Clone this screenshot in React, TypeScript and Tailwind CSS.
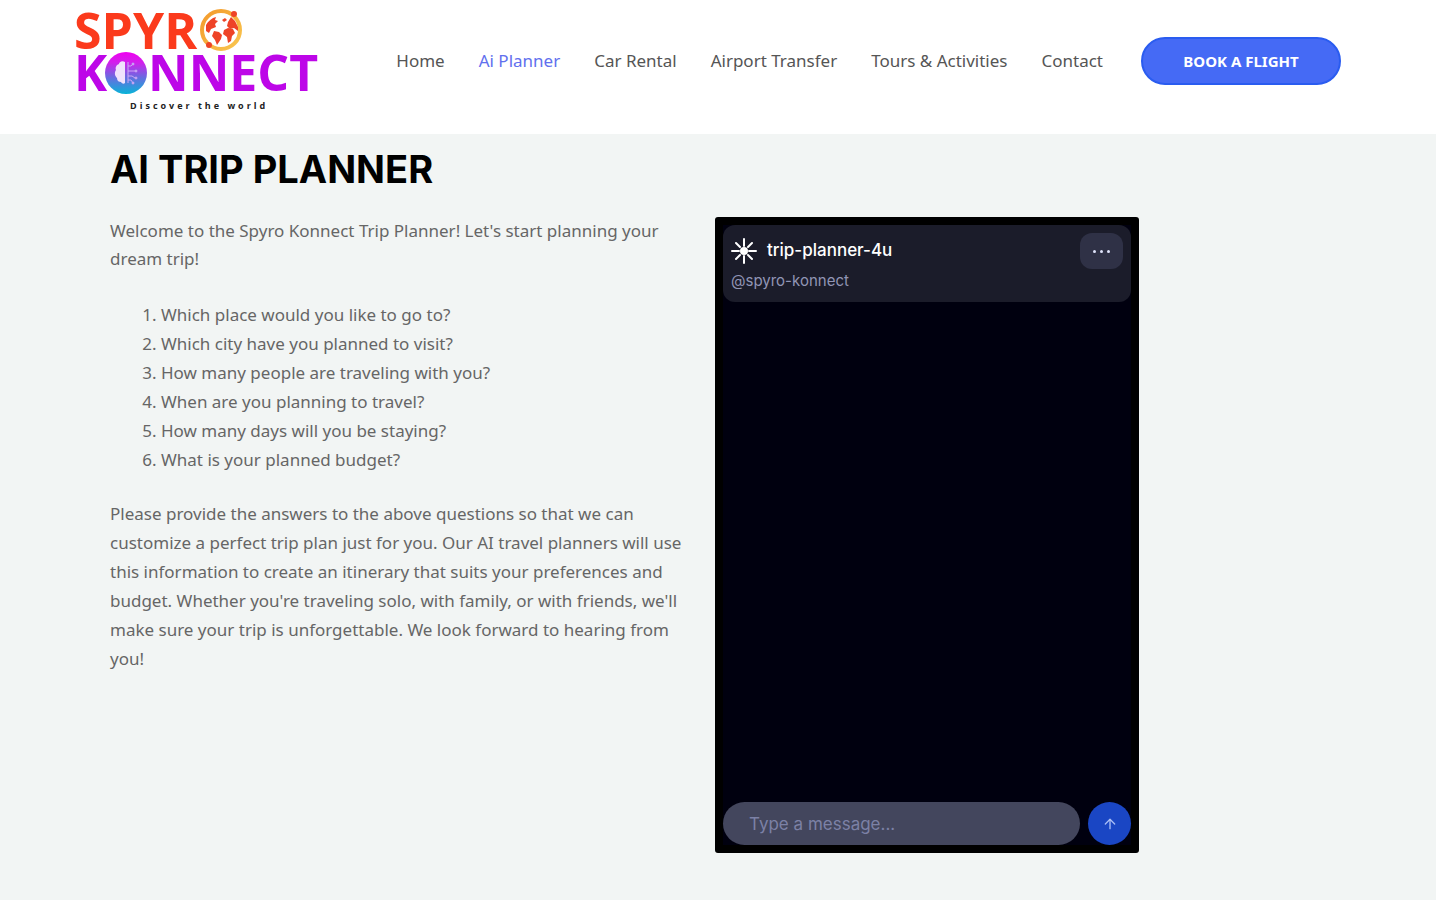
import { clsx } from "clsx"
import { ArrowUp } from "lucide-react"

const links = [
  "Home",
  "Ai Planner",
  "Car Rental",
  "Airport Transfer",
  "Tours & Activities",
  "Contact",
]

const questions = [
  "Which place would you like to go to?",
  "Which city have you planned to visit?",
  "How many people are traveling with you?",
  "When are you planning to travel?",
  "How many days will you be staying?",
  "What is your planned budget?",
]

function Logo() {
  return (
    <svg
      viewBox="0 0 248 106"
      className="h-[106px] w-[248px] shrink-0 overflow-visible font-['Open_Sans',sans-serif]"
      role="img"
      aria-label="Spyro Konnect"
    >
      <defs>
        <linearGradient id="brain" x1="0" y1="0" x2="0" y2="1">
          <stop offset="0" stopColor="#f000f0" />
          <stop offset="0.25" stopColor="#d21fec" />
          <stop offset="0.6" stopColor="#6a6be0" />
          <stop offset="1" stopColor="#08b4d8" />
        </linearGradient>
        <linearGradient id="ring" x1="0" y1="0" x2="1" y2="1">
          <stop offset="0" stopColor="#f39a2c" />
          <stop offset="1" stopColor="#f9c650" />
        </linearGradient>
      </defs>
      <text x="-2" y="41" fontSize="50" fontWeight="700" fill="#fb3a1c">
        SPYR
      </text>
      <text x="-2" y="83" fontSize="50" fontWeight="700" fill="#bd06e8">
        K
      </text>
      <text x="72" y="83" fontSize="50" fontWeight="700" fill="#bd06e8">
        NNECT
      </text>
      {/** Globe */}
      <circle cx="145" cy="22" r="19" fill="#fff" stroke="url(#ring)" strokeWidth="4" />
      <g fill="#ee4327">
        <path d="M130 17c2-4 6-7 10-8l-1 3 3 1-3 3 1 3-5 2-2 4-3-2z" />
        <path d="M138 23l5 1 3 3-1 4-4 6-2-5-3-4z" />
        <path d="M146 12l3-2 2 2-3 2z" />
        <path d="M152 14l3-5 4 4 3 6v4l-4-3-4 1-3-3z" />
        <path d="M148 22l4-2 5 1 2 4-3 3-1 5-3 2-1-6-4-3z" />
        <circle cx="158" cy="6" r="3" />
        <circle cx="133" cy="37" r="3" />
      </g>
      {/** Brain, half organic and half circuit */}
      <circle cx="50" cy="65" r="21" fill="url(#brain)" />
      <path
        d="M49 54c-3-2-6 0-6 2-3 1-4 4-3 6-2 3-1 6 1 8 0 3 2 4 4 4 1 2 3 2 4 1z"
        fill="#f0e2fc"
      />
      <g stroke="#c9a6f5" fill="#c9a6f5" strokeWidth="1">
        <path d="M52 54v21M52 58h3l2-2M52 63h7M52 68h4l3 2M52 72h3l2 3" fill="none" />
        <circle cx="57" cy="56" r="1" />
        <circle cx="60" cy="63" r="1" />
        <circle cx="60" cy="70" r="1" />
        <circle cx="57" cy="75" r="1" />
      </g>
      <text
        x="54"
        y="101"
        fontSize="9"
        fontWeight="700"
        fill="#222"
        className="tracking-[3px]"
      >
        Discover the world
      </text>
    </svg>
  )
}

function Header() {
  return (
    <header className="flex min-h-[134px] items-center justify-between bg-white pr-[95px] pb-3 pl-[76px]">
      <a href="#">
        <Logo />
      </a>
      <div className="flex items-center gap-[38px]">
        <nav className="flex gap-[34px] text-[17px] whitespace-nowrap text-[#555]">
          {links.map((link) => (
            <a
              key={link}
              href="#"
              className={clsx(link === "Ai Planner" && "text-[#6170ee]")}
            >
              {link}
            </a>
          ))}
        </nav>
        <button className="h-12 w-[200px] rounded-full border-2 border-[#2a5cf0] bg-[#456af5] text-[15px] font-bold text-white">
          BOOK A FLIGHT
        </button>
      </div>
    </header>
  )
}

function Sun() {
  return (
    <svg viewBox="0 0 26 26" className="size-[26px]" aria-hidden="true">
      <circle cx="13" cy="13" r="4" fill="#fff" />
      <path
        d="M13 1v7M13 18v7M1 13h7M18 13h7M5 5l4 4M17 17l4 4M21 5l-4 4M9 17l-4 4"
        stroke="#fff"
        strokeWidth="2"
        strokeLinecap="round"
      />
    </svg>
  )
}

function Chat() {
  return (
    <section className="flex h-[636px] w-[424px] flex-col justify-between rounded-[3px] border-8 border-black bg-[#00000f] font-[Inter,sans-serif]">
      <div className="flex h-[77px] items-start justify-between rounded-xl bg-[#1b1c2a] p-2">
        <div>
          <div className="flex h-9 items-center gap-2.5">
            <Sun />
            <h2 className="text-[17px] font-medium text-white">trip-planner-4u</h2>
          </div>
          <p className="text-[15px] leading-6 text-[#9195b5]">@spyro-konnect</p>
        </div>
        <button
          aria-label="More"
          className="flex h-9 w-[43px] items-center justify-center gap-1 rounded-xl bg-[#2f3146]"
        >
          <span className="size-[3px] rounded-full bg-[#dfe3fa]" />
          <span className="size-[3px] rounded-full bg-[#dfe3fa]" />
          <span className="size-[3px] rounded-full bg-[#dfe3fa]" />
        </button>
      </div>
      <form className="flex gap-2">
        <input
          aria-label="Message"
          placeholder="Type a message..."
          className="h-[43px] min-w-0 flex-1 rounded-full bg-[#43465d] px-[26px] text-[17px] text-white placeholder:text-[#7c81a6]"
        />
        <button
          type="button"
          aria-label="Send"
          className="flex size-[43px] items-center justify-center rounded-full bg-[#1a46c4] text-[#a9bdf5]"
        >
          <ArrowUp className="size-4" />
        </button>
      </form>
    </section>
  )
}

export default function App() {
  return (
    <div className="min-h-screen bg-[#f2f5f4] font-['Noto_Sans',sans-serif]">
      <Header />
      <main className="pt-3 pr-[136px] pb-12 pl-[110px]">
        <h1 className="font-[Inter,sans-serif] text-[38px] leading-[46px] font-bold text-black">
          AI TRIP PLANNER
        </h1>
        <div className="mt-[25px] grid grid-cols-2 gap-5">
          <div className="text-[17px] leading-[29px] text-[#666]">
            <p className="leading-7">
              Welcome to the Spyro Konnect Trip Planner! Let's start planning your
              dream trip!
            </p>
            <ol className="mt-[27px] list-decimal pl-[51px]">
              {questions.map((question) => (
                <li key={question}>{question}</li>
              ))}
            </ol>
            <p className="mt-[25px]">
              Please provide the answers to the above questions so that we can
              customize a perfect trip plan just for you. Our AI travel planners
              will use this information to create an itinerary that suits your
              preferences and budget. Whether you're traveling solo, with family,
              or with friends, we'll make sure your trip is unforgettable. We look
              forward to hearing from you!
            </p>
          </div>
          <Chat />
        </div>
      </main>
    </div>
  )
}
